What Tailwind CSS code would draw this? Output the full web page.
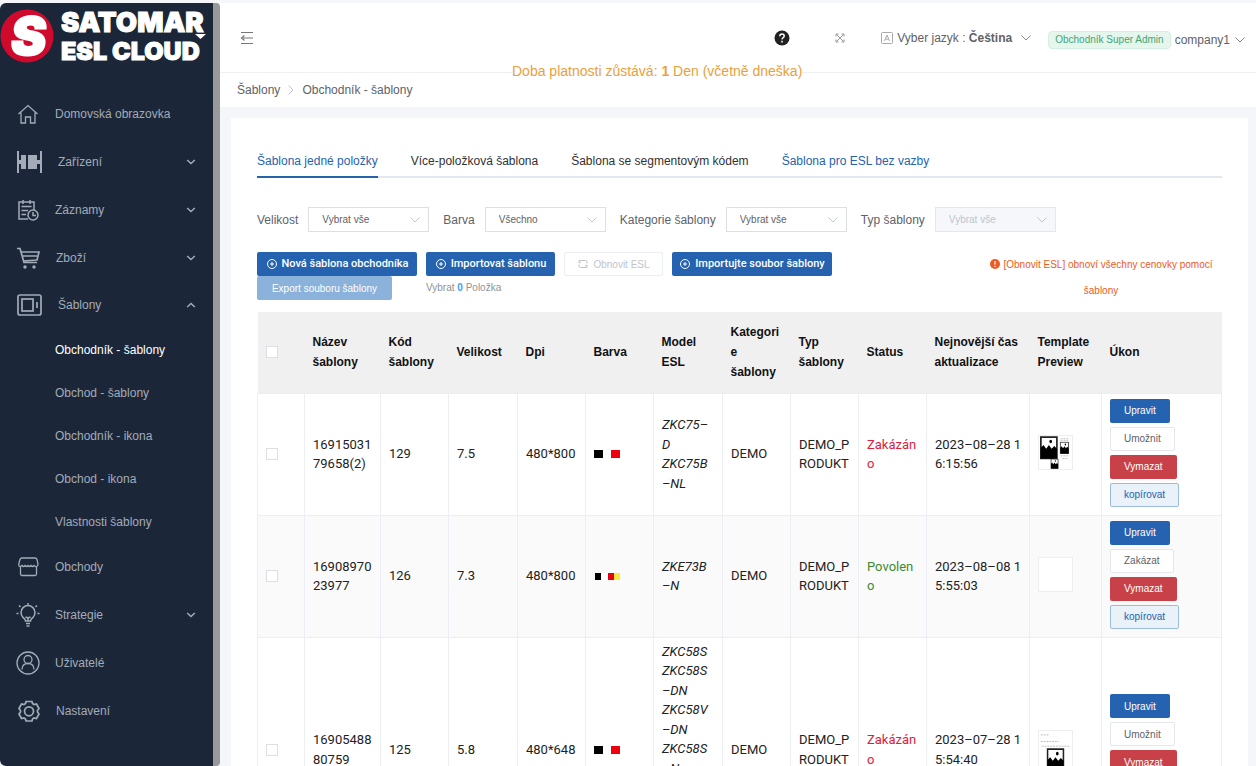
<!DOCTYPE html>
<html lang="cs">
<head>
<meta charset="utf-8">
<title>Satomar ESL Cloud</title>
<script src="https://cdn.jsdelivr.net/npm/@tailwindcss/browser@4"></script>
</head>
<body class="font-['Liberation_Sans',Arial,sans-serif] text-[12px] text-[#606266] bg-[#f5f6fa]">
<svg class="hidden" aria-hidden="true">
  <symbol id="down" viewBox="0 0 12 12"><path d="M1.500 3.500 6 8l4.500-4.500" fill="none" stroke="currentColor"/></symbol>
  <symbol id="nav-down" viewBox="0 0 12 12"><path d="M2.200 4 6 7.500 9.800 4" fill="none" stroke="currentColor" stroke-width="1.500"/></symbol>
  <symbol id="plus" viewBox="0 0 12 12"><g fill="none" stroke="currentColor"><circle cx="6" cy="6" r="4.500"/><path d="M6 4v4M4 6h4"/></g></symbol>
  <symbol id="picture" viewBox="0 0 20 26"><path d="M1 1h18v24H1z" fill="#fff" stroke="#222" stroke-width="2"/><path d="M1 13l3-3 3 4 3-4 3 4 3-3 3 3v11H1z" fill="#000"/><ellipse cx="12" cy="6" rx="1.500" ry="2"/></symbol>
</svg>
<div class="flex h-screen overflow-hidden pt-[3px]">
  <aside class="flex w-[220px] shrink-0 rounded-l-md bg-[#1b2738] border-r-[7px] border-[#999] rounded-r-sm">
    <div class="flex-1">
      <a href="#" class="flex h-[87px] items-start text-white" aria-label="Satomar ESL Cloud">
        <svg class="mt-[6px] h-[54px] w-[54px] shrink-0 overflow-visible" viewBox="0 0 54 54"><circle cx="27" cy="27" r="26.500" fill="#d00a2c"/><text x="27" y="46" text-anchor="middle" font-family="Inter" font-weight="900" font-size="53" fill="#fff" stroke="#fff" stroke-width="2" transform="translate(5 0) skewX(-6)">S</text></svg>
        <svg class="h-[64px] w-[151px] shrink-0 ml-[7px]" viewBox="0 0 151 64" fill="#fff" stroke="#fff" font-family="Inter" font-weight="900"><text x="0" y="29" font-size="27.500" stroke-width="1">SATOMAR</text><text x="0" y="57" font-size="25" stroke-width="1">ESL CLOUD</text><path d="M134 31h11l-5.500 5z" stroke="none"/></svg>
      </a>
      <nav class="text-[#a3abb8] text-[12px]">
        <ul>
          <li><a href="#" class="flex h-12 items-center pl-4"><svg class="w-6 h-6 mr-[15px]" viewBox="0 0 24 24" fill="none" stroke="currentColor" stroke-width="1.300"><path d="M2.500 12 12 3.500l9.500 8.500M5 10.500V21h4.500v-6h5v6H19V10.500"/></svg>Domovská obrazovka</a></li>
          <li><a href="#" class="flex h-12 items-center pl-4"><svg class="w-7 h-7 mr-[14px]" viewBox="0 0 28 28" fill="currentColor"><path d="M1 3h2v9h2V7h5v14H5v-5H3v9H1zM12 7h9v14h-9zM21 12h3V3h2v22h-2v-9h-3z"/></svg>Zařízení<svg class="w-3 h-3 ml-auto mr-4"><use href="#nav-down"/></svg></a></li>
          <li><a href="#" class="flex h-12 items-center pl-4"><svg class="w-6 h-6 mr-[15px]" viewBox="0 0 24 24" fill="none" stroke="currentColor" stroke-width="1.500"><path d="M12 21H3V4h15v8M7 2v4M14 2v4M5.500 8.500h10M5.500 12.500H12M5.500 16.500H10"/><circle cx="17" cy="17" r="5"/><path d="M17 14v3.500h3"/></svg>Záznamy<svg class="w-3 h-3 ml-auto mr-4"><use href="#nav-down"/></svg></a></li>
          <li><a href="#" class="flex h-12 items-center pl-4"><svg class="w-6 h-6 mr-4" viewBox="0 0 24 24" fill="none" stroke="currentColor" stroke-width="1.700"><path d="M1 2.500h3l4 14h13M5 6h18l-2 8-14 1M6 10h15"/><circle cx="9" cy="21" r="1.700" fill="currentColor" stroke="none"/><circle cx="18" cy="21" r="1.700" fill="currentColor" stroke="none"/></svg>Zboží<svg class="w-3 h-3 ml-auto mr-4"><use href="#nav-down"/></svg></a></li>
          <li><a href="#" class="flex h-[46px] items-center pl-4"><svg class="w-7 h-7 mr-[14px]" viewBox="0 0 28 28" fill="none" stroke="currentColor" stroke-width="1.700"><rect x="2" y="4" width="23" height="20" rx="2"/><rect x="6" y="8" width="11" height="12"/><path d="M21 11v6"/></svg>Šablony<svg class="w-3 h-3 ml-auto mr-4 rotate-180"><use href="#nav-down"/></svg></a>
            <ul class="pl-[55px]">
              <li><a href="#" class="flex h-[43px] items-center text-white">Obchodník - šablony</a></li>
              <li><a href="#" class="flex h-[43px] items-center">Obchod - šablony</a></li>
              <li><a href="#" class="flex h-[43px] items-center">Obchodník - ikona</a></li>
              <li><a href="#" class="flex h-[43px] items-center">Obchod - ikona</a></li>
              <li><a href="#" class="flex h-[43px] items-center">Vlastnosti šablony</a></li>
            </ul></li>
          <li><a href="#" class="flex h-12 items-center pl-4"><svg class="w-6 h-6 mr-[15px]" viewBox="0 0 24 24" fill="none" stroke="currentColor" stroke-width="1.300"><path d="M6 3h13q1.500 0 2 1.500L22 9q0 2-1.500 2.500Q19 12 18 10.500q-1.500 2-3 0-1.500 2-3 0-1.500 2-3 0-1.500 2-3 0-1.500 1.500-3 .5Q2.500 10 3 8l1-3.500Q4.500 3 6 3zM4.500 11.500V19q0 1.500 1.500 1.500h13q1.500 0 1.500-1.500v-7.500"/></svg>Obchody</a></li>
          <li><a href="#" class="flex h-12 items-center pl-4"><svg class="w-6 h-6 mr-[15px]" viewBox="0 0 24 24" fill="none" stroke="currentColor" stroke-width="1.500"><path d="M9.500 18Q9.500 16 7 14.500a7 7 0 1 1 10 0Q14.500 16 14.500 18zM10 20.500h4M10.500 23h3M9.500 14l2.500 1 2.500-1M12 15v3M12 2.500V0M2.500 10.500H.5M23.500 10.500h-2M4.500 4 3 2.500M19.500 4 21 2.500"/></svg>Strategie<svg class="w-3 h-3 ml-auto mr-4"><use href="#nav-down"/></svg></a></li>
          <li><a href="#" class="flex h-12 items-center pl-4"><svg class="w-6 h-6 mr-[15px]" viewBox="0 0 24 24" fill="none" stroke="currentColor" stroke-width="1.300"><circle cx="12" cy="12" r="11"/><circle cx="12" cy="8.500" r="4"/><path d="M6 18.500q0-6 6-6t6 6"/></svg>Uživatelé</a></li>
          <li><a href="#" class="flex h-12 items-center pl-4"><svg class="w-6 h-6 mr-4" viewBox="0 0 24 24" fill="none" stroke="currentColor" stroke-width="1.700"><path d="M9.500 4.500 10 2.500h6l.5 2 1.500 1 2.500-.5 2.500 4.500-1.500 2v1.500l1.500 2-2.500 4.500-2.500-.5-1.500 1-.5 2h-6l-.5-2-1.500-1-2.500.5L3 15l1.500-2v-1.500L3 9.500 5.500 5l2.500.5z"/><circle cx="13" cy="12.300" r="4.500"/></svg>Nastavení</a></li>
        </ul>
      </nav>
    </div>
  </aside>

  <div class="flex min-w-0 flex-1 flex-col">
    <header class="relative flex h-[70px] shrink-0 items-center border-b border-[#f0f0f2] bg-white pl-5 pr-[10px]">
      <button aria-label="Sbalit menu"><svg class="h-[14px] w-[14px] text-[#777]" viewBox="0 0 14 14" fill="none" stroke="currentColor" stroke-width="1.200"><path d="M1 1.500h12M3 7h10M1 12.500h12M4.500 4.500 1.500 7l3 2.500"/></svg></button>
      <button class="ml-auto mr-[45px]" aria-label="Nápověda"><svg class="h-4 w-4" viewBox="0 0 16 16"><circle cx="8" cy="8" r="7.500" fill="#222"/><path d="M5.800 6.300q0-2.300 2.200-2.300t2.200 2q0 1-1 1.600T8 9.300M8 10.800v1.600" fill="none" stroke="#fff" stroke-width="1.500"/></svg></button>
      <button class="mr-9" aria-label="Celá obrazovka"><svg class="h-[10px] w-[10px] text-[#999]" viewBox="0 0 10 10" fill="none" stroke="currentColor"><path d="m1.500 1.500 7 7M8.500 1.500l-7 7M1 3.500V1h2.500M6.500 1H9v2.500M1 6.500V9h2.500M9 6.500V9H6.500"/></svg></button>
      <button class="mr-[16px] flex items-center"><svg class="mr-1 h-3 w-3 text-[#aaa]" viewBox="0 0 12 12" fill="none" stroke="currentColor"><rect x=".5" y=".5" width="11" height="11" rx="1"/><path d="m3.500 9 2.500-6 2.500 6M4.500 7.200h3"/></svg>Vyber jazyk :&nbsp;<b>Čeština</b><svg class="ml-2 h-3 w-3 text-[#888]"><use href="#down"/></svg></button>
      <button class="mt-1 flex items-center"><span class="mr-1 rounded-sm border border-[#d5efe1] bg-[#e5f6ed] px-[6px] text-[10px] leading-4 text-[#43a574]">Obchodník Super Admin</span>company1<svg class="ml-1 h-3 w-3 text-[#888]"><use href="#down"/></svg></button>
      <p class="absolute left-1/2 top-[60px] -translate-x-[226px] whitespace-nowrap bg-white text-[14px] leading-4 text-[#eaa03c]">Doba platnosti zůstává: <b>1</b> Den (včetně dneška)</p>
    </header>
    <nav class="flex h-[34px] shrink-0 items-center bg-white pl-[17px]"><a href="#">Šablony</a><svg class="mx-[5px] h-3 w-3 -rotate-90 text-[#c0c4cc]"><use href="#down"/></svg><span>Obchodník - šablony</span></nav>

    <main class="ml-[11px] mr-2 mt-[11px] min-h-0 flex-1 overflow-hidden bg-white px-[26px] pt-[27px]">
      <nav class="flex h-[33px] gap-[33px] border-b-2 border-[#e4e7ed] text-[#303133]">
        <a href="#" class="h-[33px] border-b-2 border-[#2563b0] text-[#2563b0] leading-8">Šablona jedné položky</a><a href="#" class="leading-8">Více-položková šablona</a><a href="#" class="leading-8">Šablona se segmentovým kódem</a><a href="#" class="leading-8 text-[#2563b0]">Šablona pro ESL bez vazby</a>
      </nav>
      <form class="mt-[29px] flex items-center gap-[14px]">
        <label class="flex items-center gap-[10px]">Velikost<span class="relative"><select class="h-[25px] w-[121px] appearance-none border border-[#dcdfe6] bg-white pl-[13px] text-[10px]"><option>Vybrat vše</option></select><svg class="pointer-events-none absolute right-2 top-[7px] h-3 w-3 text-[#c0c4cc]"><use href="#down"/></svg></span></label>
        <label class="flex items-center gap-[10px]">Barva<span class="relative"><select class="h-[25px] w-[121px] appearance-none border border-[#dcdfe6] bg-white pl-[13px] text-[10px]"><option>Všechno</option></select><svg class="pointer-events-none absolute right-2 top-[7px] h-3 w-3 text-[#c0c4cc]"><use href="#down"/></svg></span></label>
        <label class="flex items-center gap-[10px]">Kategorie šablony<span class="relative"><select class="h-[25px] w-[121px] appearance-none border border-[#dcdfe6] bg-white pl-[13px] text-[10px]"><option>Vybrat vše</option></select><svg class="pointer-events-none absolute right-2 top-[7px] h-3 w-3 text-[#c0c4cc]"><use href="#down"/></svg></span></label>
        <label class="flex items-center gap-[10px]">Typ šablony<span class="relative"><select disabled class="h-[25px] w-[121px] appearance-none border border-[#e4e7ed] bg-[#f5f7fa] pl-[13px] text-[10px] text-[#c0c4cc] opacity-100"><option>Vybrat vše</option></select><svg class="pointer-events-none absolute right-2 top-[7px] h-3 w-3 text-[#c0c4cc]"><use href="#down"/></svg></span></label>
      </form>
      <div class="mt-5 flex items-start justify-between">
        <div class="grid grid-cols-[160px_129px_99px_160px] gap-x-[9px] text-[10px]">
          <button class="flex h-6 items-center justify-center gap-1 rounded-xs bg-[#2563b0] font-[Roboto] text-[11px] font-medium text-white"><svg class="h-3 w-3"><use href="#plus"/></svg>Nová šablona obchodníka</button>
          <button class="flex h-6 items-center justify-center gap-1 rounded-xs bg-[#2563b0] font-[Roboto] text-[11px] font-medium text-white"><svg class="h-3 w-3"><use href="#plus"/></svg>Importovat šablonu</button>
          <button disabled class="flex h-6 items-center justify-center gap-1 rounded-xs border border-[#ebeef5] text-[#c0c4cc]"><svg class="h-3 w-3" viewBox="0 0 12 12" fill="none" stroke="currentColor"><path d="M2 5V2.500h6.500Q10 2.500 10 4v1.500M10 7v2.500H3.500Q2 9.500 2 8V6.500M2 5l2-1M10 7l-2 1"/></svg>Obnovit ESL</button>
          <button class="flex h-6 items-center justify-center gap-1 rounded-xs bg-[#2563b0] font-[Roboto] text-[11px] font-medium text-white"><svg class="h-3 w-3"><use href="#plus"/></svg>Importujte soubor šablony</button>
          <button disabled class="h-6 w-[135px] rounded-xs bg-[#8ab2da] text-white">Export souboru šablony</button>
          <p class="leading-6 text-[#909399]">Vybrat <b class="text-[#409eff]">0</b> Položka</p>
        </div>
        <p class="w-[242px] text-center text-[10px] leading-[26px] text-[#ee5a24]"><svg class="mr-1 inline h-[10px] w-[10px] align-[-1px]" viewBox="0 0 10 10"><circle cx="5" cy="5" r="5" fill="currentColor"/><path d="M5 2v3.500M5 6.700V8" stroke="#fff" stroke-width="1.200"/></svg>[Obnovit ESL] obnoví všechny cenovky pomocí šablony</p>
      </div>

      <table class="mt-2 w-full table-fixed border-collapse font-[Roboto,sans-serif] text-[13px] leading-normal text-[#222] [&_td]:border [&_td]:border-[#ebeef5] [&_td]:px-2 [&_td]:py-0 [&_th]:px-2 [&_th]:text-left [&_th]:font-bold">
        <colgroup><col class="w-[47px]"><col class="w-[76px]"><col class="w-[68px]"><col class="w-[69px]"><col class="w-[68px]"><col class="w-[68px]"><col class="w-[69px]"><col class="w-[68px]"><col class="w-[68px]"><col class="w-[68px]"><col class="w-[103px]"><col class="w-[72px]"><col></colgroup>
        <thead class="bg-[#f0f0f1] font-['Liberation_Sans',Arial,sans-serif] text-[12px] leading-5 text-[#111]"><tr class="h-[81px]">
          <th><input type="checkbox" aria-label="Vybrat vše" class="block h-3 w-3 appearance-none border border-[#dcdfe6] bg-white"></th><th>Název šablony</th><th>Kód šablony</th><th>Velikost</th><th>Dpi</th><th>Barva</th><th>Model ESL</th><th>Kategori<br>e šablony</th><th>Typ šablony</th><th>Status</th><th>Nejnovější čas aktualizace</th><th>Template Preview</th><th>Úkon</th>
        </tr></thead>
        <tbody>
          <tr class="h-[122px]">
            <td><input type="checkbox" aria-label="Vybrat 129" class="block h-3 w-3 appearance-none border border-[#dcdfe6] bg-white"></td><td>16915031<br>79658(2)</td><td>129</td><td>7.5</td><td>480*800</td>
            <td><div class="flex h-2 w-[26px]"><i class="flex-1 bg-black"></i><i class="flex-1 bg-white"></i><i class="flex-1 bg-[#f0000f]"></i></div></td>
            <td class="italic">ZKC75–<br>D<br>ZKC75B<br>–NL</td><td>DEMO</td><td>DEMO_P<br>RODUKT</td><td class="text-[#e0203a]">Zakázán<br>o</td><td class="whitespace-nowrap">2023–08–28 1<br>6:15:56</td>
            <td><svg class="mb-1 h-[35px] w-[35px] border border-[#eee] bg-white" viewBox="0 0 35 35"><use href="#picture" x="1" y="0" width="19" height="25"/><use href="#picture" x="22" y="6" width="10" height="13"/><use href="#picture" x="12" y="24" width="9" height="11"/><path d="M23 3h8M23 5h8M23 21h9M25 24h6" stroke="#bbb" stroke-dasharray="2 1"/></svg></td>
            <td><div class="mt-[5px] mb-2 flex flex-col items-start gap-1 font-['Liberation_Sans',Arial,sans-serif] text-[10px]"><button class="h-6 rounded-xs bg-[#2563b0] px-[14px] text-white">Upravit</button><button class="h-6 rounded-xs border border-[#e4e7ed] bg-white px-[13px] text-[#606266]">Umožnit</button><button class="h-6 rounded-xs bg-[#c94148] px-[14px] text-white">Vymazat</button><button class="h-6 rounded-xs border border-[#9dbcdc] bg-[#e9f1f9] px-[13px] text-[#2563b0]">kopírovat</button></div></td>
          </tr>
          <tr class="h-[122px] bg-[#fafafa]">
            <td><input type="checkbox" aria-label="Vybrat 126" class="block h-3 w-3 appearance-none border border-[#dcdfe6] bg-white"></td><td>16908970<br>23977</td><td>126</td><td>7.3</td><td>480*800</td>
            <td><div class="ml-px flex h-[7px] w-[25px]"><i class="flex-1 bg-black"></i><i class="flex-1 bg-white"></i><i class="flex-1 bg-[#e60012]"></i><i class="flex-1 bg-[#fbe73c]"></i></div></td>
            <td class="italic">ZKE73B<br>–N</td><td>DEMO</td><td>DEMO_P<br>RODUKT</td><td class="text-[#3d8b2f]">Povolen<br>o</td><td class="whitespace-nowrap">2023–08–08 1<br>5:55:03</td>
            <td><div class="mb-1 h-[35px] w-[35px] border border-[#eee] bg-white"></div></td>
            <td><div class="mt-[5px] mb-2 flex flex-col items-start gap-1 font-['Liberation_Sans',Arial,sans-serif] text-[10px]"><button class="h-6 rounded-xs bg-[#2563b0] px-[14px] text-white">Upravit</button><button class="h-6 rounded-xs border border-[#e4e7ed] bg-white px-[13px] text-[#606266]">Zakázat</button><button class="h-6 rounded-xs bg-[#c94148] px-[14px] text-white">Vymazat</button><button class="h-6 rounded-xs border border-[#9dbcdc] bg-[#e9f1f9] px-[13px] text-[#2563b0]">kopírovat</button></div></td>
          </tr>
          <tr class="h-[225px]">
            <td><input type="checkbox" aria-label="Vybrat 125" class="block h-3 w-3 appearance-none border border-[#dcdfe6] bg-white"></td><td>16905488<br>80759</td><td>125</td><td>5.8</td><td>480*648</td>
            <td><div class="flex h-2 w-[26px]"><i class="flex-1 bg-black"></i><i class="flex-1 bg-white"></i><i class="flex-1 bg-[#f0000f]"></i></div></td>
            <td class="align-top italic"><div class="mt-1">ZKC58S<br>ZKC58S<br>–DN<br>ZKC58V<br>–DN<br>ZKC58S<br>–N</div></td><td>DEMO</td><td>DEMO_P<br>RODUKT</td><td class="text-[#e0203a]">Zakázán<br>o</td><td class="whitespace-nowrap">2023–07–28 1<br>5:54:40</td>
            <td><svg class="h-[40px] w-[35px] border border-[#eee] bg-white" viewBox="0 0 35 40"><path d="M2 4h8M2 11h19M3 16h30" stroke="#bbb" stroke-dasharray="2 1"/><use href="#picture" x="8" y="18" width="19" height="25"/></svg></td>
            <td><div class="mt-[5px] mb-2 flex flex-col items-start gap-1 font-['Liberation_Sans',Arial,sans-serif] text-[10px]"><button class="h-6 rounded-xs bg-[#2563b0] px-[14px] text-white">Upravit</button><button class="h-6 rounded-xs border border-[#e4e7ed] bg-white px-[13px] text-[#606266]">Umožnit</button><button class="h-6 rounded-xs bg-[#c94148] px-[14px] text-white">Vymazat</button><button class="h-6 rounded-xs border border-[#9dbcdc] bg-[#e9f1f9] px-[13px] text-[#2563b0]">kopírovat</button></div></td>
          </tr>
        </tbody>
      </table>
    </main>
  </div>
</div>
</body>
</html>
